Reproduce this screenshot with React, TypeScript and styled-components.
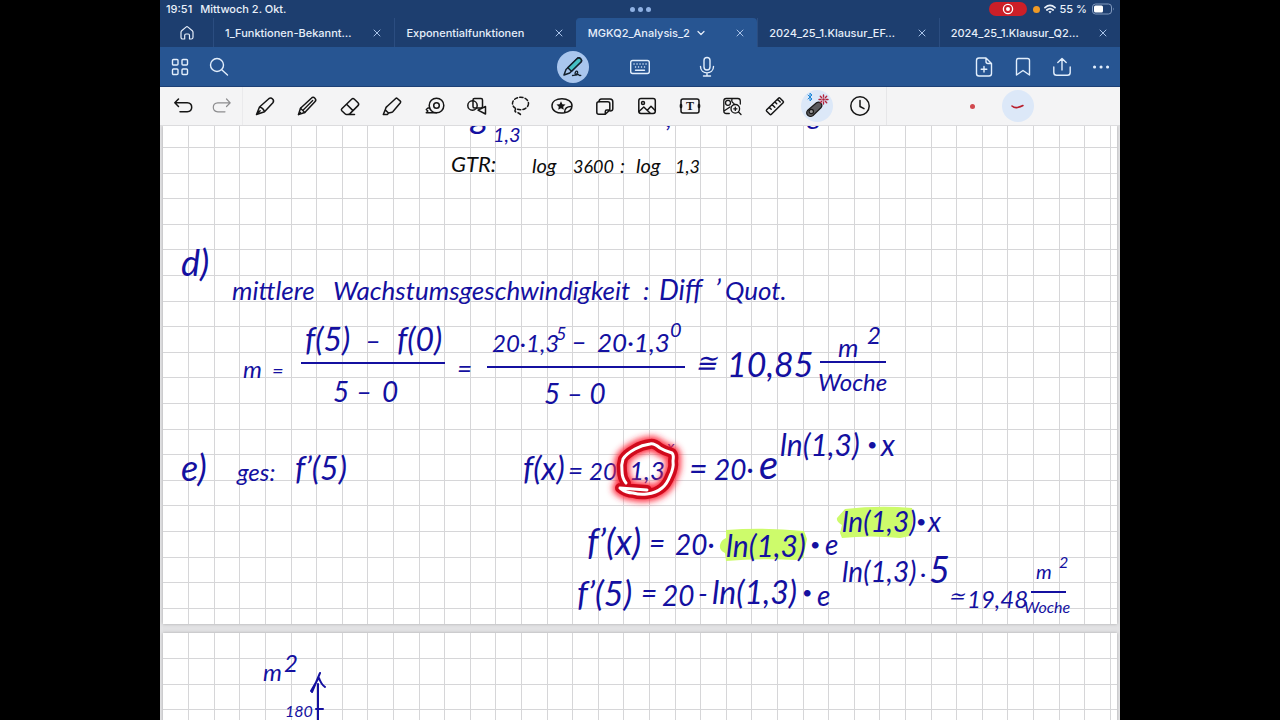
import React from 'react';
import styled, { createGlobalStyle, css } from 'styled-components';

const GlobalStyle = createGlobalStyle`
  * { box-sizing: border-box; }
  body { margin: 0; background: #000; font-family: Inter, "Liberation Sans", sans-serif; }
  button { font: inherit; color: inherit; background: none; border: 0; padding: 0; margin: 0; }
  svg { display: block; flex: none; }
`;

/* ---------- shell ---------- */

const Stage = styled.div`
  display: flex;
  justify-content: center;
  height: 100vh;
  background: #000;
`;

const Tablet = styled.main`
  display: flex;
  flex-direction: column;
  width: min(100%, calc(100vh * 4 / 3));
  height: 100%;
  overflow: hidden;
  background: #e0e0e2;
`;

const StatusBar = styled.header`
  display: grid;
  grid-template-columns: 1fr auto 1fr;
  align-items: center;
  height: 18px;
  padding: 0 5px 0 6px;
  background: #1d3e6f;
  color: #e9f0fa;
  font-size: 11px;
  font-weight: 500;
`;

const StatusGroup = styled.div<{ $end?: boolean; $gap: number }>`
  display: flex;
  align-items: center;
  justify-content: ${(p) => (p.$end ? 'flex-end' : 'flex-start')};
  gap: ${(p) => p.$gap}px;
`;

const Multitask = styled.button`
  display: flex;
  gap: 3px;
`;

const Dot = styled.span<{ $size: number; $color: string }>`
  width: ${(p) => p.$size}px;
  height: ${(p) => p.$size}px;
  border-radius: 50%;
  background: ${(p) => p.$color};
`;

const RecordPill = styled.button`
  display: flex;
  align-items: center;
  justify-content: center;
  width: 38px;
  height: 14px;
  margin-right: 2px;
  border-radius: 7px;
  background: #cb1f28;
`;

/* ---------- document tabs ---------- */

const TabBar = styled.nav`
  display: flex;
  height: 29px;
  background: #1d3e6f;
  color: #e6eefa;
`;

const HomeTab = styled.button`
  display: flex;
  align-items: center;
  justify-content: center;
  width: 53px;
`;

const Tab = styled.div<{ $active?: boolean }>`
  display: flex;
  flex: 1;
  align-items: center;
  min-width: 0;
  padding: 0 11px;
  font-size: 11px;
  font-weight: 500;
  border-left: 1px solid #2b4d80;
  ${(p) =>
    p.$active &&
    css`
      background: #275592;
      border-left-color: #275592;
      border-radius: 4px 4px 0 0;
    `}
`;

const TabTitle = styled.button`
  display: flex;
  align-items: center;
  gap: 6px;
  min-width: 0;
  margin-right: auto;
  white-space: nowrap;
`;

const TabClose = styled.button`
  color: #a8c2e8;
`;

/* ---------- main toolbar ---------- */

const Toolbar = styled.div`
  display: grid;
  grid-template-columns: 1fr auto 1fr;
  align-items: center;
  height: 39px;
  background: #275592;
  color: #e2eefc;
`;

const ToolbarGroup = styled.div<{ $end?: boolean }>`
  display: flex;
  justify-content: ${(p) => (p.$end ? 'flex-end' : 'flex-start')};
`;

const ToolbarButton = styled.button<{ $wide?: boolean }>`
  display: flex;
  align-items: center;
  justify-content: center;
  width: ${(p) => (p.$wide ? 67 : 39)}px;
  height: 38px;
`;

const Disc = styled.span<{ $color: string }>`
  display: flex;
  align-items: center;
  justify-content: center;
  width: 32px;
  height: 32px;
  border-radius: 50%;
  background: ${(p) => p.$color};
`;

/* ---------- pen tool row ---------- */

const ToolRow = styled.div`
  display: flex;
  height: 40px;
  padding-left: 3px;
  border-top: 1px solid #1d4076;
  border-bottom: 1px solid #dcdcde;
  background: #f4f4f5;
  color: #151515;
`;

const ToolGroup = styled.div<{ $share: number }>`
  display: grid;
  grid-auto-flow: column;
  grid-auto-columns: 1fr;
  flex: ${(p) => p.$share} 1 0;
  min-width: 0;
  & + & {
    padding-left: 1px;
    border-left: 1px solid #eaeaec;
  }
`;

const Tool = styled.button<{ $faded?: boolean }>`
  display: flex;
  align-items: center;
  justify-content: center;
  color: ${(p) => (p.$faded ? '#8c8c8e' : '#151515')};
`;

const Presets = styled.div`
  display: flex;
  flex: 218 1 0;
  align-items: center;
  justify-content: center;
  gap: 14px;
  margin-left: 5px;
  padding-right: 16px;
  border-left: 1px solid #e6e6e8;
`;

const Preset = styled.button`
  display: flex;
  align-items: center;
  justify-content: center;
  width: 32px;
  height: 32px;
`;

/* ---------- note pages ---------- */

const Scroller = styled.section`
  flex: 1;
  display: flex;
  flex-direction: column;
  gap: 9px;
  min-height: 0;
  padding: 0 3px;
  overflow: hidden;
  background: #e2e2e4;
`;

const Page = styled.article<{ $height: number }>`
  position: relative;
  flex: none;
  height: ${(p) => p.$height}px;
  overflow: hidden;
  background: #fff;
  box-shadow: 0 0 3px #a8a8aa;
`;

const Layer = styled.svg`
  position: absolute;
  inset: 0;
  width: 100%;
  height: 100%;
  pointer-events: none;
`;

/* $y is the writing line: about a ninth of the size lies below it */
const Ink = styled.span<{ $x: number; $y: number; $size: number; $black?: boolean }>`
  position: absolute;
  left: ${(p) => p.$x}px;
  top: ${(p) => p.$y - p.$size + Math.round(p.$size / 9)}px;
  font-family: Lato, "Liberation Sans", sans-serif;
  font-style: italic;
  font-size: ${(p) => p.$size}px;
  line-height: 1;
  white-space: pre;
  color: ${(p) => (p.$black ? '#0c0c0c' : '#1410a0')};
`;

const CELL = 25.6;

function Grid({ top }: { top: number }) {
  return (
    <Layer aria-hidden="true" stroke="#d6d6d8" strokeWidth="1" shapeRendering="crispEdges">
      {Array.from({ length: 60 }, (_, i) => (
        <line key={`v${i}`} x1={(i + 1) * CELL} x2={(i + 1) * CELL} y1="0" y2="100%" />
      ))}
      {Array.from({ length: 26 }, (_, i) => (
        <line key={`h${i}`} x1="0" x2="100%" y1={top + i * CELL} y2={top + i * CELL} />
      ))}
    </Layer>
  );
}

/* x, baseline, size, text */
type Note = [number, number, number, string];

const blackNotes: Note[] = [
  [288, 47, 22, 'GTR:'],
  [369, 47, 20, 'log'],
  [410, 47, 18, '3600'],
  [457, 47, 20, ':'],
  [473, 47, 20, 'log'],
  [512, 47, 18, '1,3'],
];

const blueNotes: Note[] = [
  [308, 2, 36, 'g'],
  [330, 16, 20, '1,3'],
  [503, 1, 26, ','],
  [645, -2, 28, 'g'],
  [18, 150, 36, 'd)'],
  [69, 174, 26, 'mittlere'],
  [170, 174, 26, 'Wachstumsgeschwindigkeit'],
  [480, 174, 26, ':'],
  [496, 174, 28, 'Diff'],
  [552, 174, 28, '’'],
  [562, 174, 26, 'Quot.'],
  [80, 252, 24, 'm'],
  [109, 252, 20, '='],
  [142, 225, 32, 'f(5)'],
  [202, 225, 28, '–'],
  [234, 225, 32, 'f(0)'],
  [170, 276, 28, '5'],
  [193, 276, 28, '–'],
  [219, 276, 28, '0'],
  [294, 252, 26, '='],
  [329, 226, 24, '20·1,3'],
  [393, 214, 18, '5'],
  [408, 226, 28, '–'],
  [434, 226, 26, '20·1,3'],
  [507, 211, 20, '0'],
  [381, 278, 28, '5 – 0'],
  [532, 246, 26, '≅'],
  [564, 251, 34, '10,85'],
  [675, 231, 26, 'm'],
  [704, 218, 24, '2'],
  [655, 265, 24, 'Woche'],
  [18, 355, 36, 'e)'],
  [74, 355, 24, 'ges:'],
  [132, 354, 32, 'f’(5)'],
  [360, 354, 32, 'f(x)'],
  [405, 354, 26, '='],
  [426, 354, 24, '20'],
  [466, 354, 26, '1,3'],
  [504, 326, 16, 'x'],
  [526, 354, 32, '='],
  [551, 354, 28, '20·'],
  [596, 354, 40, 'e'],
  [617, 330, 30, 'ln(1,3)'],
  [704, 325, 18, '•'],
  [718, 330, 30, 'x'],
  [424, 429, 36, 'f’(x)'],
  [486, 427, 28, '='],
  [512, 429, 28, '20·'],
  [563, 431, 30, 'ln(1,3)'],
  [647, 425, 18, '•'],
  [662, 429, 28, 'e'],
  [679, 406, 28, 'ln(1,3)'],
  [753, 402, 18, '•'],
  [765, 406, 28, 'x'],
  [414, 480, 34, 'f’(5)'],
  [478, 477, 28, '='],
  [499, 480, 28, '20'],
  [535, 478, 28, '-'],
  [549, 478, 32, 'ln(1,3)'],
  [639, 473, 18, '•'],
  [654, 480, 28, 'e'],
  [679, 456, 28, 'ln(1,3)'],
  [757, 456, 24, '·'],
  [766, 457, 36, '5'],
  [785, 477, 20, '≃'],
  [804, 482, 24, '19,48'],
  [873, 453, 20, 'm'],
  [896, 442, 16, '2'],
  [861, 487, 16, 'Woche'],
];

const graphNotes: Note[] = [
  [100, 48, 24, 'm'],
  [121, 39, 24, '2'],
  [122, 84, 16, '180'],
];

const laserLoop =
  'M484 364L457 362Q463 367 470 367Q477 369 484 368Q493 367 499 362Q504 358 507 350Q511 342 510 335Q511 329 509 327Q502 325 497 322Q491 317 487 318Q479 319 472 323Q463 328 460 333Q458 339 459 345Q459 352 463 357';

/* ---------- icons ---------- */

const Icon = ({ children, size = 24, width = 1.5 }: { children: React.ReactNode; size?: number; width?: number }) => (
  <svg
    width={size}
    height={size}
    viewBox={`0 0 ${size} ${size}`}
    fill="none"
    stroke="currentColor"
    strokeWidth={width}
    strokeLinecap="round"
    strokeLinejoin="round"
    aria-hidden="true"
  >
    {children}
  </svg>
);

const CloseIcon = () => (
  <Icon size={12} width={1}><path d="M3 3l6 6M9 3l-6 6" /></Icon>
);

const tools: { name: string; art: React.ReactNode }[] = [
  {
    name: 'Füller',
    art: <path d="M3.500 20.500l3-7.500L15.800 4.700a2.900 2.900 0 0 1 4.100 4L11.500 17.800zM6.500 13q3.800.800 5 4.800M3.500 20.500l3.600-3.700" />,
  },
  {
    name: 'Bleistift',
    art: (
      <>
        <path d="M3.500 20.500l2-6.300L16.300 4.200a2.500 2.500 0 0 1 3.600 3.600L9.800 18.500z" />
        <path d="M5.500 14.200l4.300 4.300M8 16.200l9.700-9.700M3.500 20.500l2-2" strokeWidth="1.300" />
      </>
    ),
  },
  {
    name: 'Radierer',
    art: <path d="M3.800 14.800l9.800-9.600a2 2 0 0 1 2.800 0l3.600 3.600a2 2 0 0 1 0 2.800L12 19.600q-1 .9-2 .9H8.600q-.8 0-1.600-.8l-3.200-3q-.9-1 0-1.900zM8.600 10.200l6.400 6.400M11 20.500h5.500" />,
  },
  {
    name: 'Textmarker',
    art: <path d="M7 12.500l8.700-8q.8-.700 1.600 0l3 2.600q.8.700.1 1.600L12.800 17.800q-.700.700-1.800.700L8.500 19 5.200 15.900l.700-2.200q.3-.700 1.100-1.200zM5.200 15.900l-1.900 4.600 4.200-.1 1-1.400" />,
  },
  {
    name: 'Klebeband',
    art: (
      <>
        <circle cx="13.500" cy="11.500" r="7.300" />
        <circle cx="13.500" cy="11.500" r="2.800" />
        <path d="M13.500 18.800H3.300l1.500-1.800-1.500-1.500 1.700-1.500h1.700" />
      </>
    ),
  },
  {
    name: 'Formen',
    art: (
      <>
        <circle cx="7.500" cy="11.500" r="4.700" />
        <rect x="8" y="4.500" width="9.500" height="9.500" rx="1.500" />
        <path d="M20.500 12.500v7.500l-7.500-3.800z" fill="#f4f4f5" />
      </>
    ),
  },
  {
    name: 'Lasso',
    art: (
      <>
        <ellipse cx="12.500" cy="9.500" rx="8" ry="6.200" strokeDasharray="3.200 2.200" />
        <path d="M7.500 15.500q-1.500 2 1 2.800 3 .8 4.500 2.700" strokeDasharray="3 2" />
      </>
    ),
  },
  {
    name: 'Sticker',
    art: (
      <>
        <path d="M14.500 18.800C7 20.200 2 16.500 2 11.800S6.500 4.800 12 4.800s10 2.700 10 7c0 3.500-3 6.200-7.500 7zM14.500 18.500c0-4 2.500-6.300 7.200-6" />
        <path d="M11 7.300l1.400 2.900 3.100.4-2.300 2.100.6 3.100-2.800-1.500-2.800 1.500.6-3.100-2.300-2.100 3.100-.4z" fill="currentColor" stroke="none" />
      </>
    ),
  },
  {
    name: 'Haftnotiz',
    art: (
      <>
        <path d="M3.800 9.800q0-2 2-2h9q2 0 2 2v6.200l-4.500 4.300H5.800q-2 0-2-2zM12.300 20v-2.500q0-1.500 1.500-1.500h3" />
        <path d="M6 7.800q0-2.800 2.500-2.800H17q2.800 0 2.800 2.800v6.900q0 2.300-2.800 2.300" />
      </>
    ),
  },
  {
    name: 'Bild',
    art: (
      <>
        <rect x="3.800" y="4.500" width="16.500" height="15" rx="2.200" />
        <circle cx="8" cy="9" r="1.500" />
        <path d="M4 17.500l4.800-4.500 6.200 6M12.500 16l3.500-3.800 4.200 4.300" />
      </>
    ),
  },
  {
    name: 'Text',
    art: (
      <>
        <rect x="3" y="5" width="18" height="14" rx="2" />
        <path d="M3 11v2M21 11v2" strokeWidth="2.600" />
        <text x="12" y="16" textAnchor="middle" fontFamily="Liberation Serif, serif" fontWeight="700" fontSize="12" fill="currentColor" stroke="none">T</text>
      </>
    ),
  },
  {
    name: 'Bildersuche',
    art: (
      <g strokeWidth="1.300">
        <path d="M20.300 10V7q0-2.500-2.500-2.500H6.300q-2.500 0-2.500 2.500v10q0 2.500 2.500 2.500h3M4 17l6-4M12 5q-1 3 2 4.500" />
        <circle cx="8" cy="8.800" r="2.500" />
        <circle cx="15.300" cy="14.800" r="4.300" />
        <path d="M18.500 18l2.500 2.500M15.300 13.200v3.200M13.700 14.800h3.200" />
      </g>
    ),
  },
  {
    name: 'Lineal',
    art: <path d="M3.700 15.800L15.500 4.200q.8-.8 1.600 0l3 3q.8.8 0 1.600L8.400 20.300q-.8.800-1.600 0l-3.100-3q-.7-.8 0-1.500zM6.500 13.500l1.700 1.700M9.200 10.700l2.600 2.600M12 8l1.700 1.700M14.700 5.500l2.500 2.500" />,
  },
];

const LaserIcon = () => (
  <Icon size={32} width={1.200}>
    <path d="M6.500 20.500L15.500 12.800q2.300-1.600 4.300.3 2 2.200.4 4.400L12 25.500q-2.500 2-4.900 0-2.500-2.300-.6-5z" fill="#5b5b5e" stroke="#1a1a1a" />
    <circle cx="10.300" cy="21.500" r="2.200" fill="#9a9a9c" stroke="#1a1a1a" />
    <path d="M7 5l4 4-2 1.800V3.200L11 5 7 9" stroke="#1d86d8" strokeWidth="1" />
    <circle cx="22.500" cy="9.500" r="1.300" fill="#b3203a" stroke="none" />
    <path d="M22.500 5v2M22.500 12v2M18 9.500h2M25 9.500h2M19.300 6.300l1.400 1.400M24.300 11.300l1.400 1.400M25.700 6.300l-1.400 1.400M20.700 11.300l-1.400 1.400" stroke="#b3203a" strokeWidth="1.400" />
  </Icon>
);

const documents = [
  { title: '1_Funktionen-Bekannt…' },
  { title: 'Exponentialfunktionen' },
  { title: 'MGKQ2_Analysis_2', active: true },
  { title: '2024_25_1.Klausur_EF…' },
  { title: '2024_25_1.Klausur_Q2…' },
];

const Notes = ({ list, black }: { list: Note[]; black?: boolean }) => (
  <>
    {list.map(([x, y, size, text], i) => (
      <Ink key={i} $x={x} $y={y} $size={size} $black={black}>{text}</Ink>
    ))}
  </>
);

export default function App() {
  return (
    <>
      <GlobalStyle />
      <Stage>
        <Tablet>
          <StatusBar>
            <StatusGroup $gap={8}>
              <span>19:51</span>
              <span>Mittwoch 2. Okt.</span>
            </StatusGroup>
            <Multitask aria-label="Multitasking">
              <Dot $size={5} $color="#8fb1e3" />
              <Dot $size={5} $color="#8fb1e3" />
              <Dot $size={5} $color="#8fb1e3" />
            </Multitask>
            <StatusGroup $end $gap={4}>
              <RecordPill aria-label="Bildschirmaufnahme">
                <Icon size={12} width={1.300}>
                  <circle cx="6" cy="6" r="4.600" stroke="#fff" />
                  <circle cx="6" cy="6" r="2" fill="#fff" stroke="none" />
                </Icon>
              </RecordPill>
              <Dot $size={7} $color="#ef9a26" />
              <Icon size={12} width={1.800}>
                <path d="M1 4.600Q6 .2 11 4.600M2.900 7Q6 4.200 9.100 7" />
                <path d="M4.300 8.600Q6 7.200 7.700 8.600L6 10.500z" fill="currentColor" stroke="none" />
              </Icon>
              <span>55 %</span>
              <svg width="24" height="12" viewBox="0 0 24 12" aria-hidden="true">
                <rect x="1.500" y="1" width="19" height="10" rx="3" fill="none" stroke="#8199be" />
                <rect x="3" y="2.500" width="9" height="7" rx="1.500" fill="#fff" />
                <path d="M22 4.500q1.500 1.500 0 3z" fill="#8199be" />
              </svg>
            </StatusGroup>
          </StatusBar>

          <TabBar aria-label="Dokumente">
            <HomeTab aria-label="Start">
              <Icon size={16} width={1.200}>
                <path d="M2 7.200q0-.9.700-1.500l4.300-3.600q1-.8 2 0l4.300 3.600q.7.600.7 1.500v5q0 1.800-1.800 1.800h-1.700v-3.500q0-1.500-1.300-1.500H7q-1.300 0-1.300 1.500V14H3.800Q2 14 2 12.200z" />
              </Icon>
            </HomeTab>
            {documents.map((d) => (
              <Tab key={d.title} $active={d.active}>
                <TabTitle>
                  {d.title}
                  {d.active && <Icon size={10} width={1.200}><path d="M2 3.500l3 3 3-3" /></Icon>}
                </TabTitle>
                <TabClose aria-label={`${d.title} schließen`}><CloseIcon /></TabClose>
              </Tab>
            ))}
          </TabBar>

          <Toolbar>
            <ToolbarGroup>
              <ToolbarButton aria-label="Übersicht">
                <Icon size={20} width={1.400}>
                  <rect x="2.500" y="2.500" width="5.500" height="5.500" rx="1" />
                  <rect x="12" y="2.500" width="5.500" height="5.500" rx="1" />
                  <rect x="2.500" y="12" width="5.500" height="5.500" rx="1" />
                  <rect x="12" y="12" width="5.500" height="5.500" rx="1" />
                </Icon>
              </ToolbarButton>
              <ToolbarButton aria-label="Suchen">
                <Icon size={20} width={1.400}>
                  <circle cx="8" cy="8" r="6.500" />
                  <path d="M13 13l5.500 5" />
                </Icon>
              </ToolbarButton>
            </ToolbarGroup>
            <ToolbarGroup>
              <ToolbarButton $wide aria-label="Schreiben">
                <Disc $color="#a9c6ee">
                  <Icon>
                    <path d="M3 20l2-5.500L16 3.800a2.500 2.500 0 0 1 3.700 3.500L8.700 18z" fill="#a9c6ee" stroke="#14202c" />
                    <path d="M6.800 12.800L16 3.800a2.500 2.500 0 0 1 3.700 3.500l-9.200 9z" fill="#45bfc4" stroke="#14202c" />
                    <path d="M11.500 20.500c3.500 0 6-2.500 5-4-1.300-1.200-3 1-2.300 3 .6 1.500 2 .2 3-.1.800.2.5 1.500 2.600 1" stroke="#14202c" strokeWidth="1.300" />
                  </Icon>
                </Disc>
              </ToolbarButton>
              <ToolbarButton $wide aria-label="Tastatur">
                <Icon width={1.400}>
                  <rect x="2.700" y="5.500" width="18.600" height="13" rx="2" />
                  <path d="M6 9h.1M9 9h.1M12 9h.1M15 9h.1M18 9h.1M7.500 12h.1M10.500 12h.1M13.500 12h.1M16.500 12h.1M7.500 15.200h9" />
                </Icon>
              </ToolbarButton>
              <ToolbarButton $wide aria-label="Aufnehmen">
                <Icon width={1.400}>
                  <rect x="9" y="2.500" width="6" height="12.500" rx="3" />
                  <path d="M5.500 11.500c0 8.500 13 8.500 13 0M12 18v3M8.500 21h7" />
                </Icon>
              </ToolbarButton>
            </ToolbarGroup>
            <ToolbarGroup $end>
              <ToolbarButton aria-label="Seite hinzufügen">
                <Icon width={1.400}>
                  <path d="M14 3H7Q4.500 3 4.500 5.500v13Q4.500 21 7 21h10q2.500 0 2.500-2.500V8.500zM14 3v3.500q0 2 2 2h3.500M12 11.500v5.500M9.200 14.300h5.600" />
                </Icon>
              </ToolbarButton>
              <ToolbarButton aria-label="Lesezeichen">
                <Icon width={1.400}>
                  <path d="M5.500 20V5.500q0-2 2-2h9q2 0 2 2V20L12 15.500z" />
                </Icon>
              </ToolbarButton>
              <ToolbarButton aria-label="Teilen">
                <Icon width={1.400}>
                  <path d="M3.800 12v5.500q0 2.800 2.800 2.800h10.800q2.800 0 2.800-2.800V12M12 15V3.500M7.800 7.500L12 3.500l4.200 4" />
                </Icon>
              </ToolbarButton>
              <ToolbarButton aria-label="Mehr">
                <Icon width={3}><path d="M5.500 12h.1M12 12h.1M18.500 12h.1" /></Icon>
              </ToolbarButton>
            </ToolbarGroup>
          </Toolbar>

          <ToolRow>
            <ToolGroup $share={79}>
              <Tool aria-label="Rückgängig">
                <Icon><path d="M7.500 5L3.800 8.800l3.700 3.700M4 8.800h12.200q4.500.2 4.500 4.500t-4.500 4.500H9" /></Icon>
              </Tool>
              <Tool $faded aria-label="Wiederholen">
                <Icon width={1.200}><path d="M16.500 5l3.700 3.800-3.700 3.700M20 8.800H7.800q-4.500.2-4.500 4.500t4.500 4.500H15" /></Icon>
              </Tool>
            </ToolGroup>
            <ToolGroup $share={640}>
              {tools.map((t) => (
                <Tool key={t.name} aria-label={t.name}><Icon>{t.art}</Icon></Tool>
              ))}
              <Tool aria-label="Laserpointer">
                <Disc $color="#dce8f8"><LaserIcon /></Disc>
              </Tool>
              <Tool aria-label="Zeit">
                <Icon><circle cx="12" cy="12" r="9.200" /><path d="M12 6.500v6l4 2.200" /></Icon>
              </Tool>
            </ToolGroup>
            <Presets>
              <Preset aria-label="Laserpunkt"><Dot $size={5} $color="#d1494f" /></Preset>
              <Preset aria-label="Laserspur">
                <Disc $color="#dce8f8">
                  <Icon size={16} width={1.600}><path d="M2 8q2.500 2.200 5.500 1.500T13 7.500" stroke="#b81f2d" /></Icon>
                </Disc>
              </Preset>
            </Presets>
          </ToolRow>

          <Scroller>
            <Page $height={498}>
              <Grid top={21.4} />
              <Layer aria-hidden="true" fill="#cdfb6b">
                <path d="M563 404q38-3 78 1l3 8-4 19-7 2q-36-2-70 1l-1-8q-6-3-5-8t6-7z" />
                <path d="M682 383q34-4 67-1l2 8-4 20-10 2q-30-3-58 0l-2-5 2-8q-6-3-5-7z" />
              </Layer>
              <Notes list={blackNotes} black />
              <Notes list={blueNotes} />
              <Layer aria-hidden="true" fill="none" stroke="#1410a0" strokeWidth="2">
                <path d="M138 237H282M324 241H522M657 236H723M868 466H903" />
              </Layer>
              <Layer aria-hidden="true" fill="none" strokeLinejoin="round" strokeLinecap="round">
                <defs>
                  <filter id="glow" x="-30%" y="-30%" width="160%" height="160%">
                    <feGaussianBlur stdDeviation="3" />
                  </filter>
                </defs>
                <path d={laserLoop} stroke="#ff2a3c" strokeWidth="15" filter="url(#glow)" />
                <path d={laserLoop} stroke="#d00a1c" strokeWidth="10" />
                <path d={laserLoop} stroke="#fff" strokeWidth="3" />
              </Layer>
            </Page>
            <Page $height={640}>
              <Grid top={CELL} />
              <Notes list={graphNotes} />
              <Layer aria-hidden="true" fill="none" stroke="#1410a0" strokeWidth="2" strokeLinecap="round">
                <path d="M155 51V640M153 76h7M149 59L157 40M148 58l7-12M156 45q2 6 6 9" />
              </Layer>
            </Page>
          </Scroller>
        </Tablet>
      </Stage>
    </>
  );
}
